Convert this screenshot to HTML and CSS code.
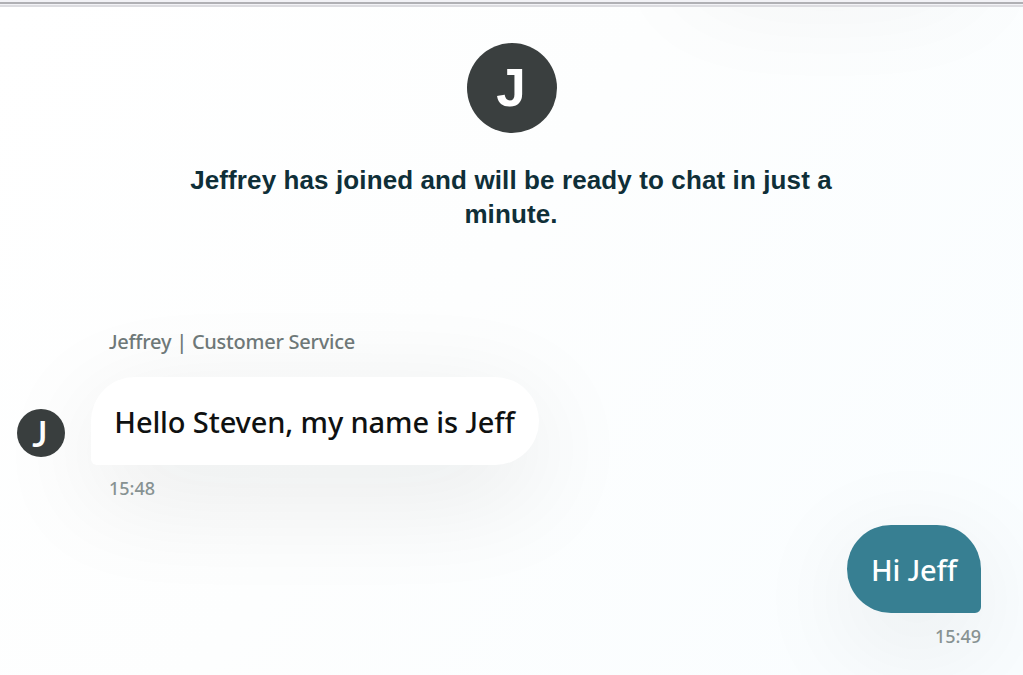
FILE: index.html
```html
<!DOCTYPE html>
<html lang="en">
<head>
  <meta charset="UTF-8">
  <meta name="viewport" content="width=device-width, initial-scale=1.0">
  <title>Customer Service Chat</title>
  <link rel="stylesheet" href="styles.css">
</head>
<body>
  <div class="window-edge"></div>

  <main class="chat">
    <header class="intro">
      <div class="avatar avatar-large">J</div>
      <h1 class="intro-text">Jeffrey has joined and will be ready to chat in just a minute.</h1>
    </header>

    <section class="message received">
      <div class="sender"><span class="initial">J</span>effrey | Customer Service</div>
      <div class="message-row">
        <div class="avatar avatar-small">J</div>
        <div class="bubble"><span class="text">Hello Steven, my name is <span class="initial">J</span>eff</span></div>
      </div>
      <time class="time">15:48</time>
    </section>

    <section class="message sent">
      <div class="bubble"><span class="text">Hi <span class="initial">J</span>eff</span></div>
      <time class="time">15:49</time>
    </section>
  </main>
</body>
</html>
```
FILE: styles.css
```css
* {
  box-sizing: border-box;
}

body {
  margin: 0;
  height: 675px;
  overflow: hidden;
  background: linear-gradient(125deg, #ffffff 0%, #fdfefe 45%, #f9fdff 100%);
  font-family: "Noto Sans", "Open Sans", sans-serif;
}

/* Bottom border of the window title bar */
.window-edge {
  height: 7px;
  background: linear-gradient(#f2f2f6 0 2px, #b0b0b4 2px 4px, #f2f2f6 4px 5px, #dcdce0 5px 7px);
}

.chat {
  position: relative;
  height: 668px;
  overflow: hidden;
  display: flex;
  flex-direction: column;
}

.chat::before {
  content: '';
  position: absolute;
  top: -125px;
  left: 680px;
  width: 300px;
  height: 88px;
  border-radius: 44px;
  box-shadow: 0 28px 112px rgba(15, 17, 17, 0.05);
}

.avatar {
  display: flex;
  align-items: center;
  justify-content: center;
  flex-shrink: 0;
  border-radius: 50%;
  background: #3a3f3f;
  color: #fff;
}

.avatar-large {
  width: 90px;
  height: 90px;
  padding: 0 1px 1px 0;
  font: bold 53px "Liberation Sans", Arial, sans-serif;
}

.avatar-small {
  width: 48px;
  height: 48px;
  margin-top: 24px;
  padding-right: 2px;
  font: 600 36px Lato, sans-serif;
}

.intro {
  display: flex;
  flex-direction: column;
  align-items: center;
  height: 320px;
  padding-top: 36px;
}

.intro-text {
  width: 680px;
  margin: 30px 1px 0 0;
  color: #0f2f38;
  font: bold 26px/34px "Liberation Sans", Arial, sans-serif;
  letter-spacing: 0.11px;
  text-align: center;
}

.message {
  display: flex;
  flex-direction: column;
}

.message-row {
  display: flex;
  align-items: center;
  gap: 26px;
  padding-left: 17px;
}

/* Capital J that rests on the baseline */
.initial {
  font-family: Lato, sans-serif;
  line-height: 1;
}

.received .sender {
  height: 50px;
  padding-left: 109px;
  color: #6f7979;
  font-size: 20px;
  font-weight: 500;
  letter-spacing: -0.25px;
  line-height: 30px;
}

.bubble {
  display: flex;
  align-items: center;
  justify-content: center;
  height: 88px;
  border-radius: 44px;
  background: #fff;
  color: #0f1111;
  font-size: 29px;
  font-weight: 500;
  letter-spacing: -0.12px;
  box-shadow: 0 28px 112px rgba(15, 17, 17, 0.09);
  white-space: nowrap;
}

.received .bubble {
  width: 448px;
  border-bottom-left-radius: 6px;
}

.received .text {
  margin-right: 1px;
}

.received .time {
  padding-left: 109px;
}

.time {
  height: 49px;
  margin-top: 11px;
  color: #879292;
  font-size: 18px;
  font-weight: 500;
  line-height: 24px;
}

.sent {
  align-items: flex-end;
  padding-right: 42px;
}

.sent .bubble {
  width: 134px;
  border-bottom-right-radius: 6px;
  background: #377f92;
  color: #fff;
}
```
